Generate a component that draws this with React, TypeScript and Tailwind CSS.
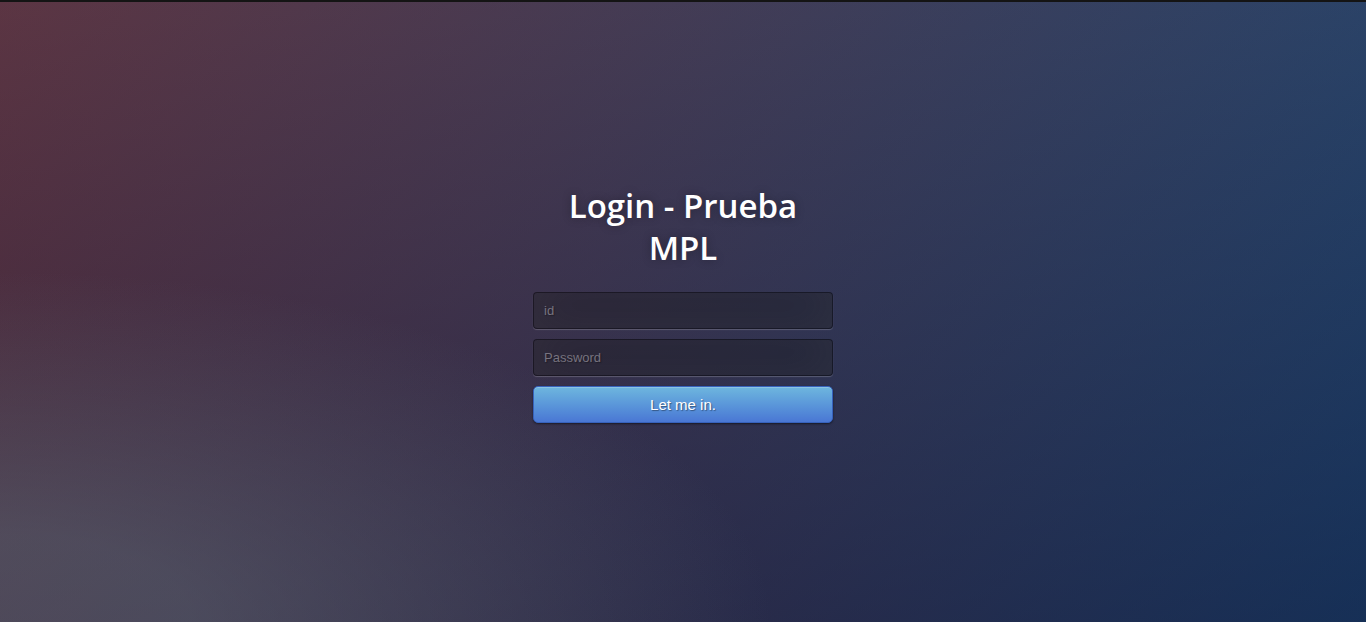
export default function App() {
  return (
    <div className="min-h-screen w-full border-t-2 border-[#141414] bg-[#092756] bg-[image:radial-gradient(ellipse_at_0%_100%,rgba(104,128,138,.4)_10%,rgba(138,114,76,0)_40%),linear-gradient(to_bottom,rgba(57,173,219,.25)_0%,rgba(42,60,87,.4)_100%),linear-gradient(135deg,#670d10_0%,#092756_100%)] font-['Open_Sans',sans-serif]">
      <div className="mx-auto w-[300px] pt-[183px]">
        <h1 className="text-center text-[33px] font-semibold leading-[42px] text-white [text-shadow:0_0_10px_rgba(0,0,0,0.3)]">
          Login - Prueba MPL
        </h1>
        <form
          className="mt-[23px] flex flex-col gap-[10px] font-['Liberation_Sans',Arial,sans-serif]"
          onSubmit={(e) => e.preventDefault()}
        >
          <input
            type="text"
            placeholder="id"
            className="h-[37px] w-full rounded-[4px] border border-black/30 bg-black/30 px-[10px] text-[13px] text-white outline-none placeholder:text-[#77737f] [text-shadow:1px_1px_1px_rgba(0,0,0,0.3)] shadow-[inset_0_-5px_45px_rgba(100,100,100,0.2),0_1px_1px_rgba(255,255,255,0.2)]"
          />
          <input
            type="password"
            placeholder="Password"
            className="h-[37px] w-full rounded-[4px] border border-black/30 bg-black/30 px-[10px] text-[13px] text-white outline-none placeholder:text-[#77737f] [text-shadow:1px_1px_1px_rgba(0,0,0,0.3)] shadow-[inset_0_-5px_45px_rgba(100,100,100,0.2),0_1px_1px_rgba(255,255,255,0.2)]"
          />
          <button
            type="submit"
            className="h-[37px] w-full rounded-[5px] border border-[#3762bc] bg-[#4a77d4] bg-gradient-to-b from-[#6eb6de] to-[#4a77d4] pt-[2px] text-[15px] text-white [text-shadow:1px_1px_1px_rgba(0,0,0,0.4)] shadow-[inset_0_1px_0_rgba(255,255,255,0.2),0_1px_2px_rgba(0,0,0,0.5)]"
          >
            Let me in.
          </button>
        </form>
      </div>
    </div>
  );
}
